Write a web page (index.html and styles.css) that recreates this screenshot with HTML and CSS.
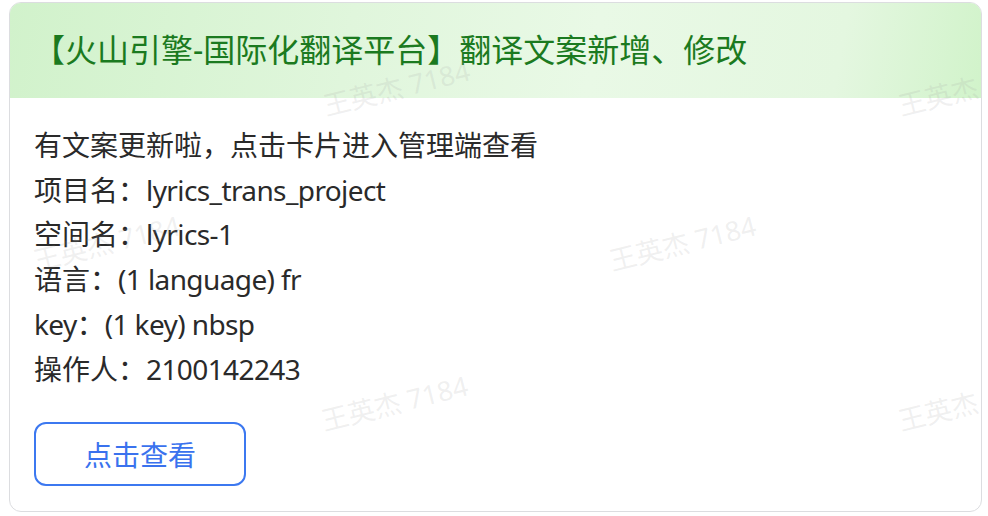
FILE: index.html
```html
<!DOCTYPE html>
<html lang="zh-CN">
<head>
<meta charset="utf-8">
<title>翻译文案新增、修改</title>
<link rel="stylesheet" href="styles.css">
</head>
<body>
<div class="card">
  <div class="card-header">
    <h1 class="title">【火山引擎-国际化翻译平台】翻译文案新增、修改</h1>
  </div>
  <div class="card-body">
    <div class="lines">
      <p class="line">有文案更新啦，点击卡片进入管理端查看</p>
      <p class="line">项目名：<span class="val">lyrics_trans_project</span></p>
      <p class="line">空间名：<span class="val">lyrics-1</span></p>
      <p class="line">语言：<span class="val">(1 language) fr</span></p>
      <p class="line"><span class="val">key</span>：<span class="val">(1 key) nbsp</span></p>
      <p class="line">操作人：<span class="val">2100142243</span></p>
    </div>
    <button class="btn" type="button">点击查看</button>
  </div>
  <div class="watermarks" aria-hidden="true">
    <span class="wm wm-a">王英杰 7184</span>
    <span class="wm wm-b">王英杰 7184</span>
    <span class="wm wm-c">王英杰 7184</span>
    <span class="wm wm-d">王英杰 7184</span>
    <span class="wm wm-e">王英杰 7184</span>
    <span class="wm wm-f">王英杰 7184</span>
  </div>
</div>
</body>
</html>
```

FILE: styles.css
```css
* { box-sizing: border-box; }

html, body {
  margin: 0;
  padding: 0;
  background: #ffffff;
}

body {
  font-family: "Noto Sans", "Noto Sans CJK SC", sans-serif;
  color: #262626;
}

.card {
  position: relative;
  margin: 2px 0 0 9px;
  width: 973px;
  height: 510px;
  border: 1.5px solid #dcdde0;
  border-radius: 12px;
  overflow: hidden;
  background: #ffffff;
}

.card-header {
  height: 95px;
  display: flex;
  align-items: center;
  padding: 0 0 0 23px;
  background: linear-gradient(100deg, #d1f2cb 0%, #e0f6dc 35%, #e9f9e6 60%, #e4f7e0 85%, #d1f3ca 100%);
}

.title {
  margin: 0;
  font-size: 32px;
  font-weight: 400;
  color: #1b7a20;
  line-height: 1.2;
}

.card-body {
  padding: 25px 24px 0 24px;
}

.lines {
  display: flex;
  flex-direction: column;
}

.line {
  margin: 0;
  font-size: 28px;
  line-height: 44.7px;
  color: #2a2a2a;
}

.val {
  letter-spacing: -0.6px;
}

.btn {
  margin-top: 31px;
  width: 212px;
  height: 64px;
  border: 2px solid #3c78f0;
  border-radius: 12px;
  background: #ffffff;
  color: #3a72ee;
  font-family: "Noto Sans", "Noto Sans CJK SC", sans-serif;
  font-size: 28px;
  padding: 0;
}

.watermarks {
  position: absolute;
  inset: 0;
  pointer-events: none;
}

.wm {
  position: absolute;
  font-family: "Noto Sans", "Noto Sans CJK SC", sans-serif;
  font-size: 27px;
  line-height: 27px;
  color: rgba(160, 160, 160, 0.17);
  white-space: nowrap;
  transform: rotate(-14deg);
  transform-origin: left bottom;
}

.wm-a { left: 317px; top: 89px; }
.wm-b { left: 892px; top: 89px; }
.wm-c { left: 27px; top: 244px; }
.wm-d { left: 603px; top: 244px; }
.wm-e { left: 315px; top: 404px; }
.wm-f { left: 892px; top: 404px; }
```
